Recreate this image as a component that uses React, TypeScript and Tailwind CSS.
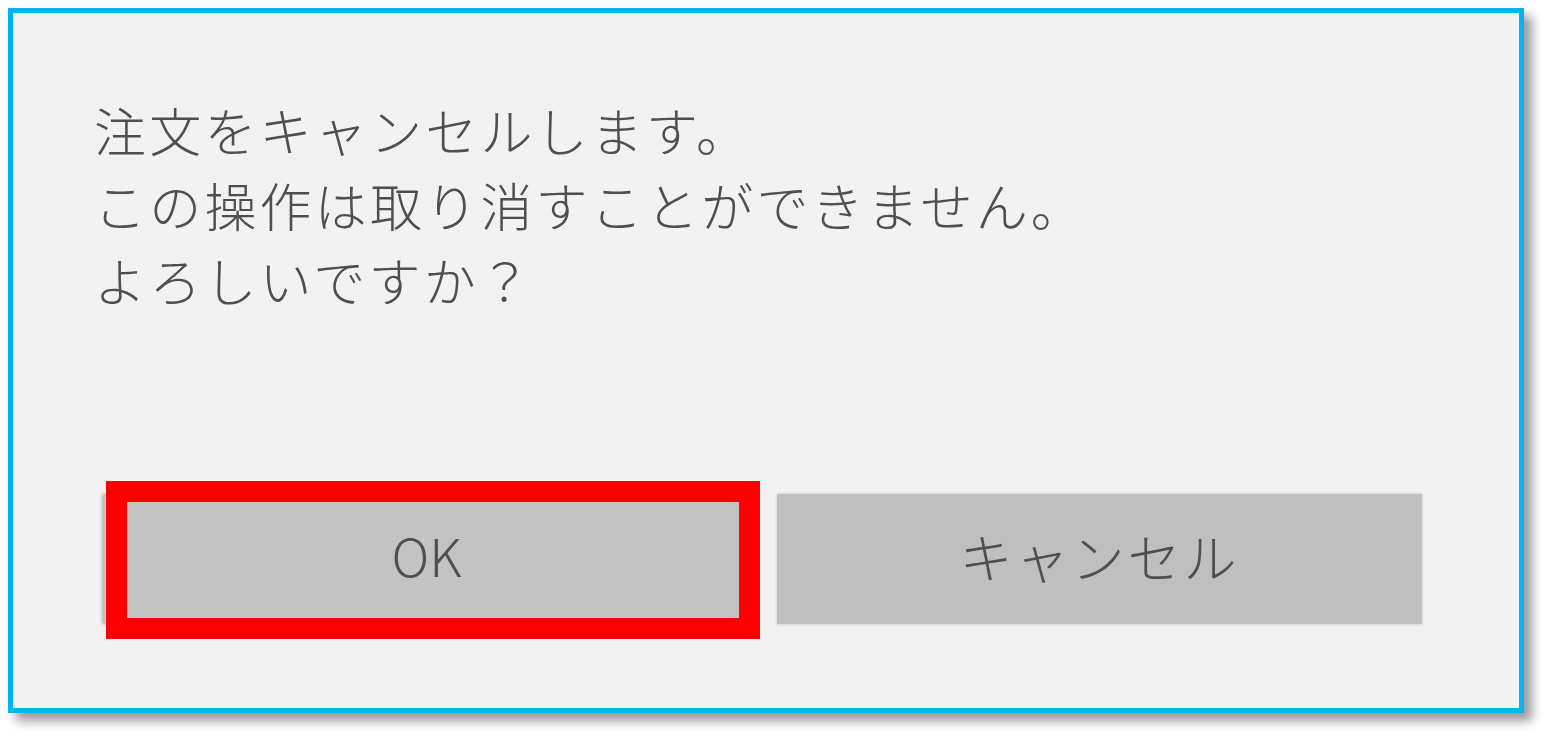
export default function App() {
  const font = { fontFamily: '"Noto Sans CJK JP", "Noto Sans", sans-serif' };
  return (
    <div className="w-[1558px] h-[746px] bg-white pt-[8px] pl-[8px]" style={font}>
      <div className="relative w-[1516px] h-[705px] border-[5px] border-[#00b4f0] bg-[#f2f2f2] shadow-[8px_8px_10px_rgba(0,0,0,0.4)]">
        <div className="pt-[79px] pl-[81px] text-[52px] leading-[75px] text-[#4f4f4f] font-light tracking-[3.2px]">
          <p>注文をキャンセルします。</p>
          <p>この操作は取り消すことができません。</p>
          <p>よろしいですか？</p>
        </div>

        <div className="mt-[177px] ml-[91px] flex gap-[28px]">
          <div className="relative">
            <button className="w-[645px] h-[130px] pb-[8px] bg-[#c3c3c3] text-[#4f4f4f] text-[52px] font-light shadow-[-2px_0_3px_rgba(0,0,0,0.25)]">
              OK
            </button>
            <div className="absolute left-[2px] top-[-13px] w-[654px] h-[158px] border-[21px] border-[#ff0000] pointer-events-none" />
          </div>
          <button className="w-[645px] h-[130px] pb-[4px] bg-[#bfbfbf] text-[#4f4f4f] text-[53px] font-light shadow-[0_0_3px_rgba(0,0,0,0.2)] tracking-[3px]">
            キャンセル
          </button>
        </div>
      </div>
    </div>
  );
}
